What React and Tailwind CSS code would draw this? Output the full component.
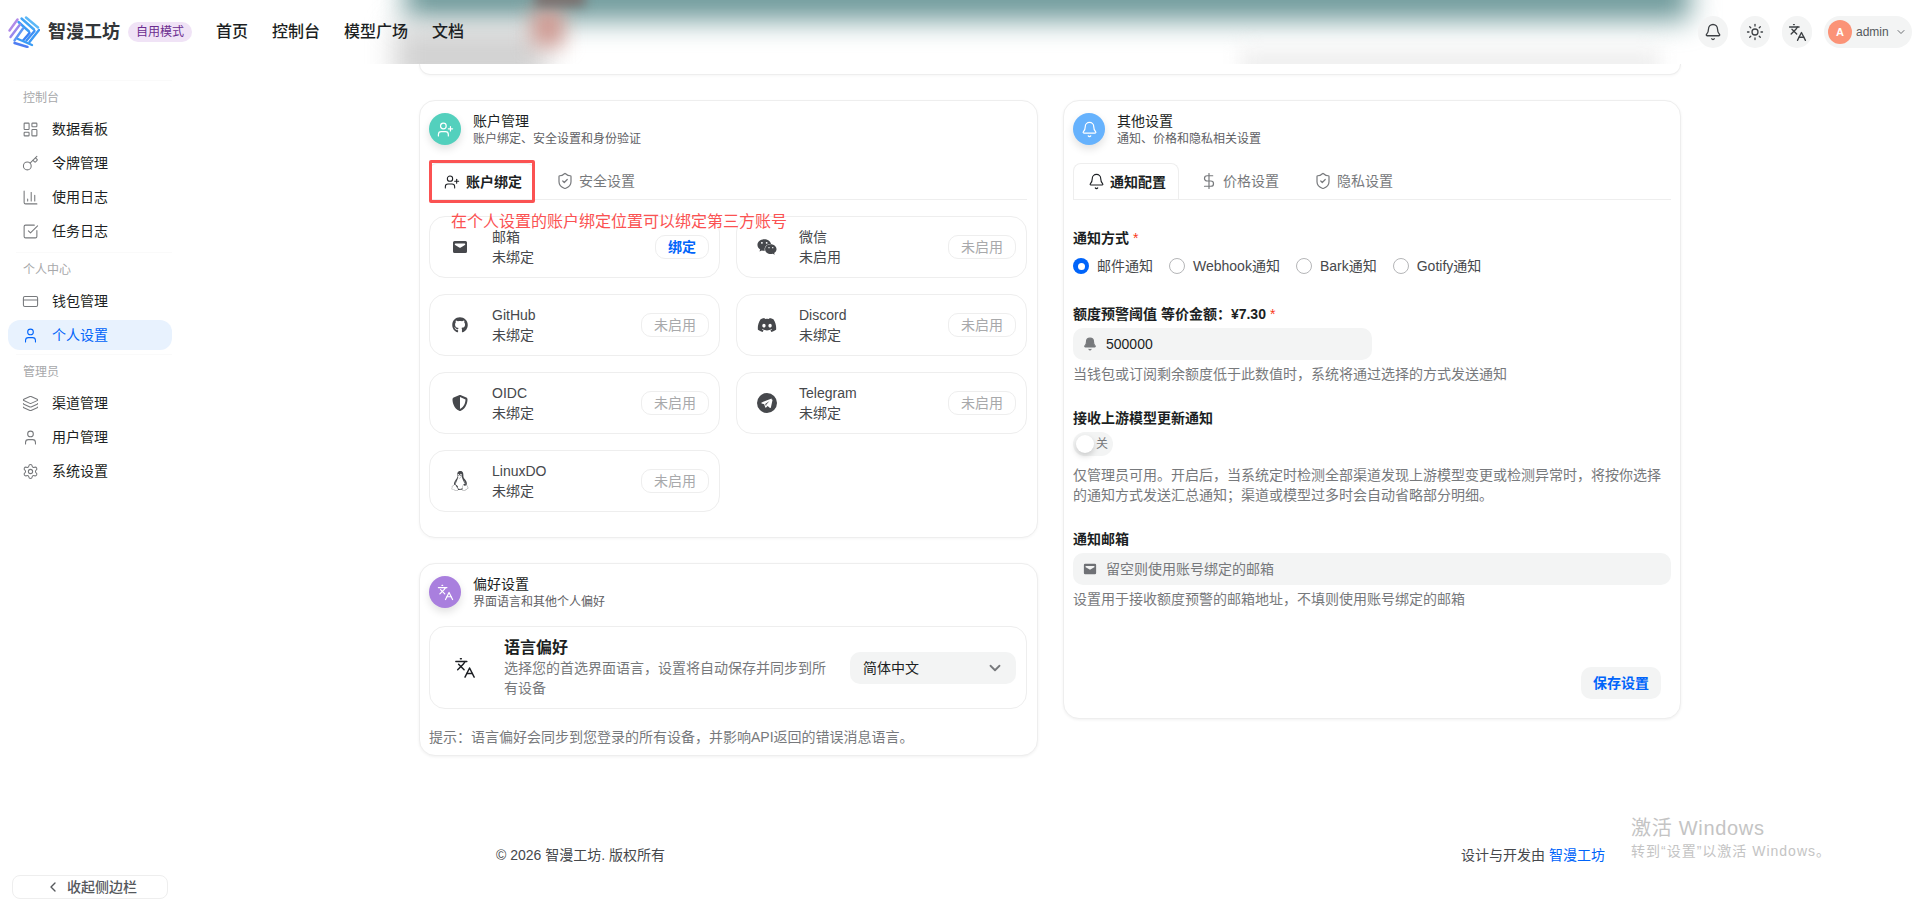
import React from 'react';
import {
  Bell, ChartColumn, ChevronDown, ChevronLeft, CreditCard, DollarSign, Key, Languages,
  LayoutDashboard, Layers, Settings, ShieldCheck, SquareCheckBig, Sun, User, UserPlus,
} from 'lucide-react';
import { FaDiscord, FaGithub, FaLinux, FaWeixin } from 'react-icons/fa';
import { FaShieldHalved } from 'react-icons/fa6';

const sections = [
  {
    title: '控制台',
    pad: 'pb-1.5',
    items: [
      { label: '数据看板', icon: LayoutDashboard },
      { label: '令牌管理', icon: Key },
      { label: '使用日志', icon: ChartColumn },
      { label: '任务日志', icon: SquareCheckBig },
    ],
  },
  {
    title: '个人中心',
    pad: 'pb-1',
    items: [
      { label: '钱包管理', icon: CreditCard },
      { label: '个人设置', icon: User, active: true },
    ],
  },
  {
    title: '管理员',
    pad: 'pb-1',
    items: [
      { label: '渠道管理', icon: Layers },
      { label: '用户管理', icon: User },
      { label: '系统设置', icon: Settings },
    ],
  },
];

const bindings = [
  { name: '邮箱', status: '未绑定', icon: MailIcon, size: 'h-4 w-4', action: '绑定' },
  { name: '微信', status: '未启用', icon: FaWeixin, size: 'h-5 w-5' },
  { name: 'GitHub', status: '未绑定', icon: FaGithub, size: 'h-4 w-4' },
  { name: 'Discord', status: '未绑定', icon: FaDiscord, size: 'h-5 w-5' },
  { name: 'OIDC', status: '未绑定', icon: FaShieldHalved, size: 'h-4 w-4' },
  { name: 'Telegram', status: '未绑定', icon: TelegramIcon, size: 'h-5 w-5' },
  { name: 'LinuxDO', status: '未绑定', icon: FaLinux, size: 'h-5 w-5' },
];

function MailIcon({ className }) {
  return (
    <svg viewBox="0 0 16 16" className={className} fill="currentColor">
      <path d="M2.5 2h11A1.5 1.5 0 0 1 15 3.500v9a1.500 1.500 0 0 1-1.500 1.500h-11A1.500 1.500 0 0 1 1 12.500v-9A1.500 1.500 0 0 1 2.500 2Zm1 2.600a.7.7 0 0 0-.4 1.300l4.500 2.800a.8.8 0 0 0 .8 0l4.500-2.800a.7.7 0 0 0-.4-1.300h-9Z" fillRule="evenodd" />
    </svg>
  );
}

function TelegramIcon({ className }) {
  return (
    <svg viewBox="0 0 20 20" className={className} fill="currentColor">
      <path fillRule="evenodd" d="M10 0a10 10 0 1 1 0 20 10 10 0 0 1 0-20Zm4.600 5.500L4.700 9.400c-.5.200-.5.800 0 1l2.500.9 1 3c.1.400.6.500.9.200l1.500-1.400 2.400 1.800c.3.200.8.100.9-.3l1.600-7.500c.1-.5-.4-.8-.9-.6ZM8.200 11l4.300-2.900-3.100 3.400-.4 1.700L8.200 11Z" />
    </svg>
  );
}

function Logo() {
  return (
    <svg viewBox="0 0 32 32" className="h-8 w-8" fill="none" strokeWidth="2.400" strokeLinecap="round">
      <path d="M18 1.500 L30 11.500" stroke="#5cb8f7" />
      <path d="M13.500 2.500 L26 13.500" stroke="#42a5f6" />
      <path d="M10.500 6 L21 15.500" stroke="#3b9bf5" />
      <path d="M9.500 3.500 L1.500 14.500" stroke="#b18ae8" />
      <path d="M12 8.500 L2.500 21" stroke="#9a88ec" />
      <path d="M15 12.500 L6.500 24.500" stroke="#5f97f4" />
      <path d="M31 14 L21.500 26" stroke="#3c9af5" />
      <path d="M26.500 15 L18.500 24.500" stroke="#3d8ff5" />
      <path d="M21.500 17 L15.500 24" stroke="#3b82f6" />
      <path d="M6.500 27 L19.500 31" stroke="#4f7df2" />
      <path d="M10 23 L24 29" stroke="#3a9cf5" />
    </svg>
  );
}

function TopBlur() {
  return (
    <div className="pointer-events-none absolute inset-0 overflow-hidden">
      <div className="absolute left-[405px] top-[-26px] h-[46px] w-[1285px] bg-[#6c9899] blur-[14px]" />
      <div className="absolute left-[395px] top-[26px] h-[60px] w-[150px] bg-[#d2d2d2] blur-[14px]" />
      <div className="absolute left-[532px] top-[8px] h-[38px] w-[32px] bg-[#d09a92] blur-[10px]" />
      <div className="absolute left-[535px] top-[-8px] h-[14px] w-[50px] bg-[#7a6a68] blur-[6px]" />
      <div className="absolute left-[1240px] top-[48px] h-[40px] w-[420px] bg-[#f0f0f0] blur-[10px]" />
    </div>
  );
}

function Header() {
  return (
    <header className="relative flex h-16 shrink-0 items-center bg-white">
      <TopBlur />
      <div className="relative flex items-center pl-2">
        <Logo />
        <span className="ml-2 text-[18px] font-bold text-[#333639]">智漫工坊</span>
        <span className="ml-2 flex h-5 w-16 items-center justify-center rounded-full bg-[#f0e3f6] text-xs text-[#6b2c8f]">自用模式</span>
        <nav className="ml-6 flex gap-6 text-base font-medium text-[#1c1f23]">
          <span>首页</span>
          <span>控制台</span>
          <span>模型广场</span>
          <span>文档</span>
        </nav>
      </div>
      <div className="relative ml-auto flex items-center gap-3 pr-2">
        <span className="flex h-8 w-[30px] items-center justify-center rounded-full bg-[#f3f4f4] text-[#3d4044]"><Bell size={18} strokeWidth={1.7} /></span>
        <span className="flex h-8 w-[30px] items-center justify-center rounded-full bg-[#f3f4f4] text-[#3d4044]"><Sun size={18} strokeWidth={1.7} /></span>
        <span className="flex h-8 w-[30px] items-center justify-center rounded-full bg-[#f3f4f4] text-[#3d4044]"><Languages size={19} strokeWidth={1.7} /></span>
        <span className="flex h-8 w-[88px] items-center rounded-full bg-[#f3f4f4] pl-1">
          <span className="flex h-6 w-6 items-center justify-center rounded-full bg-[#fb9377] text-[11px] font-semibold text-white">A</span>
          <span className="ml-1 text-xs font-medium text-[#55585c]">admin</span>
          <ChevronDown size={12} className="ml-1.5 text-[#6b6e72]" />
        </span>
      </div>
    </header>
  );
}

function Sidebar() {
  return (
    <aside className="flex w-[180px] shrink-0 flex-col bg-white pt-4">
      {sections.map((section) => (
        <div key={section.title} className={`ml-2 w-[164px] ${section.pad}`}>
          <div className="ml-2 border-t border-[#fafafa] pt-[7px]">
            <div className="ml-[7px] flex h-5 items-center text-xs text-[#a7a8aa]">{section.title}</div>
          </div>
          <div className="mt-1.5 flex flex-col gap-1">
            {section.items.map(({ label, icon: Icon, active }) => (
              <div
                key={label}
                className={active
                  ? 'flex h-[30px] items-center gap-[13px] rounded-xl bg-[#e8f2fe] pl-[14px] text-sm text-[#0064fa]'
                  : 'flex h-[30px] items-center gap-[13px] rounded-xl pl-[14px] text-sm text-[#1c1f23]'}
              >
                <Icon size={17} strokeWidth={1.5} className={active ? 'text-[#0064fa]' : 'text-[#77797c]'} />
                <span>{label}</span>
              </div>
            ))}
          </div>
        </div>
      ))}
      <div className="mt-auto mb-3 ml-3 flex h-6 w-[156px] items-center rounded-lg border border-[#eeeeee] pl-[32px] text-sm font-medium text-[#55585c]">
        <ChevronLeft size={16} />
        <span className="ml-[6px]">收起侧边栏</span>
      </div>
    </aside>
  );
}

function CardHead({ color, icon: Icon, title, desc }) {
  return (
    <div className="flex items-center gap-3">
      <span className={`flex h-8 w-8 items-center justify-center rounded-full text-white shadow-[0_4px_8px_rgba(0,0,0,0.12)] ${color}`}>
        <Icon size={17} strokeWidth={1.7} />
      </span>
      <div>
        <div className="text-sm leading-[20px] text-[#1c1f23]">{title}</div>
        <div className="text-xs leading-[16px] text-[#5e6064]">{desc}</div>
      </div>
    </div>
  );
}

function Tab({ icon: Icon, iconSize, label, active }) {
  return (
    <div
      className={active
        ? 'flex h-9 w-[106px] items-center gap-1.5 rounded-t-lg border border-b-0 border-[#eeeeee] bg-white pl-[14px] text-sm font-semibold text-[#1c1f23]'
        : 'flex h-9 w-[106px] items-center gap-1.5 pl-[14px] text-sm text-[#77797c]'}
    >
      <span className="flex w-4 shrink-0 justify-center">
        <Icon size={iconSize} strokeWidth={1.6} className="shrink-0" />
      </span>
      <span>{label}</span>
    </div>
  );
}

function BindCard({ item }) {
  const Icon = item.icon;
  return (
    <div className="flex h-[62px] items-center rounded-2xl border border-[#eeeeee] px-[10px]">
      <span className="flex w-10 justify-center text-[#46484c]">
        <Icon className={item.size} />
      </span>
      <div className="ml-3 flex-1 text-sm leading-5 text-[#46484c]">
        <div>{item.name}</div>
        <div>{item.status}</div>
      </div>
      {item.action ? (
        <span className="flex h-6 items-center rounded-[10px] border border-[#eeeeee] px-3 text-sm font-semibold text-[#0064fa]">{item.action}</span>
      ) : (
        <span className="flex h-6 items-center rounded-[10px] border border-[#eeeeee] px-3 text-sm text-[#a8a9ab]">未启用</span>
      )}
    </div>
  );
}

function AccountCard() {
  return (
    <section className="relative h-[438px] rounded-2xl border border-[#eeeeee] bg-white pt-[10px] pr-[10px] pl-[9px] shadow-[0_1px_3px_rgba(0,0,0,0.04)]">
      <CardHead color="bg-[#53d0bd]" icon={UserPlus} title="账户管理" desc="账户绑定、安全设置和身份验证" />
      <div className="mt-4 flex gap-2 border-b border-[#eeeeee]">
        <Tab icon={UserPlus} iconSize={16} label="账户绑定" active />
        <Tab icon={ShieldCheck} iconSize={18} label="安全设置" />
      </div>
      <div className="mt-4 grid grid-cols-2 gap-4">
        {bindings.map((item) => <BindCard key={item.name} item={item} />)}
      </div>
      <div className="absolute left-[9px] top-[59px] h-[43px] w-[106px] rounded-[2px] border-[3px] border-[#fb5252]" />
      <div className="absolute left-[31px] top-[111px] text-base leading-[20px] text-[#fb5252]">在个人设置的账户绑定位置可以绑定第三方账号</div>
    </section>
  );
}

function PreferenceCard() {
  return (
    <section className="h-[193px] rounded-2xl border border-[#eeeeee] bg-white pt-[10px] pr-[10px] pl-[9px] shadow-[0_1px_3px_rgba(0,0,0,0.06)]">
      <CardHead color="bg-[#a97fde]" icon={Languages} title="偏好设置" desc="界面语言和其他个人偏好" />
      <div className="mt-4 flex h-[83px] items-center rounded-2xl border border-[#eeeeee] pr-[10px]">
        <span className="ml-[24px] text-[#1c1f23]"><Languages size={22} strokeWidth={1.6} /></span>
        <div className="ml-[28px] w-[330px]">
          <div className="text-base leading-[20px] font-semibold text-[#1c1f23]">语言偏好</div>
          <div className="text-sm leading-5 text-[#77797c]">选择您的首选界面语言，设置将自动保存并同步到所有设备</div>
        </div>
        <div className="ml-auto flex h-8 w-[166px] items-center justify-between rounded-[10px] bg-[#f3f4f4] pr-3 pl-[13px] text-sm text-[#1c1f23]">
          <span>简体中文</span>
          <ChevronDown size={18} strokeWidth={2.4} className="text-[#77797c]" />
        </div>
      </div>
      <p className="mt-[18px] text-sm leading-5 text-[#77797c]">提示：语言偏好会同步到您登录的所有设备，并影响API返回的错误消息语言。</p>
    </section>
  );
}

function Radio({ label, checked }) {
  return (
    <span className="flex items-center gap-2 text-sm text-[#46484c]">
      {checked ? (
        <span className="flex h-4 w-4 items-center justify-center rounded-full bg-[#0064fa]">
          <span className="h-[7px] w-[7px] rounded-full bg-white" />
        </span>
      ) : (
        <span className="h-4 w-4 rounded-full border border-[#b5b6b8]" />
      )}
      {label}
    </span>
  );
}

function Label({ children, required }) {
  return (
    <div className="h-5 text-sm leading-5 font-semibold text-[#1c1f23]">
      {children}
      {required && <span className="ml-1 font-normal text-[#f93920]">*</span>}
    </div>
  );
}

function OtherCard() {
  return (
    <section className="h-[619px] rounded-2xl border border-[#eeeeee] bg-white px-[9px] pt-[10px] shadow-[0_1px_3px_rgba(0,0,0,0.06)]">
      <CardHead color="bg-[#66b2fd]" icon={Bell} title="其他设置" desc="通知、价格和隐私相关设置" />
      <div className="mt-4 flex gap-2 border-b border-[#eeeeee]">
        <Tab icon={Bell} iconSize={17} label="通知配置" active />
        <Tab icon={DollarSign} iconSize={18} label="价格设置" />
        <Tab icon={ShieldCheck} iconSize={18} label="隐私设置" />
      </div>

      <div className="mt-7">
        <Label required>通知方式</Label>
        <div className="mt-1.5 flex h-6 items-center gap-4">
          <Radio label="邮件通知" checked />
          <Radio label="Webhook通知" />
          <Radio label="Bark通知" />
          <Radio label="Gotify通知" />
        </div>
      </div>

      <div className="mt-[26px]">
        <Label required>额度预警阈值 等价金额：¥7.30</Label>
        <div className="mt-1 flex h-8 w-[299px] items-center gap-[9px] rounded-[10px] bg-[#f3f4f4] pl-[10px] text-sm text-[#1c1f23]">
          <Bell size={14} fill="currentColor" className="text-[#77797c]" />
          <span>500000</span>
        </div>
        <p className="mt-1 text-sm leading-5 text-[#77797c]">当钱包或订阅剩余额度低于此数值时，系统将通过选择的方式发送通知</p>
      </div>

      <div className="mt-6">
        <Label>接收上游模型更新通知</Label>
        <div className="relative mt-1 flex h-6 w-10 items-center justify-end rounded-full bg-[#f3f4f4] pr-[5px] text-xs text-[#77797c]">
          <span className="absolute left-[3px] top-[3px] h-[18px] w-[18px] rounded-full bg-white shadow-[0_3px_6px_rgba(0,0,0,0.18)]" />
          关
        </div>
        <p className="mt-[9px] text-sm leading-5 text-[#77797c]">仅管理员可用。开启后，当系统定时检测全部渠道发现上游模型变更或检测异常时，将按你选择的通知方式发送汇总通知；渠道或模型过多时会自动省略部分明细。</p>
      </div>

      <div className="mt-6">
        <Label>通知邮箱</Label>
        <div className="mt-1 flex h-8 items-center gap-[9px] rounded-[10px] bg-[#f3f4f4] pl-[10px] text-sm text-[#77797c]">
          <MailIcon className="h-[14px] w-[14px] text-[#6f7175]" />
          <span>留空则使用账号绑定的邮箱</span>
        </div>
        <p className="mt-1 text-sm leading-5 text-[#77797c]">设置用于接收额度预警的邮箱地址，不填则使用账号绑定的邮箱</p>
      </div>

      <div className="mt-[58px] flex justify-end pr-[10px]">
        <span className="flex h-8 w-20 items-center justify-center rounded-[10px] bg-[#f3f4f4] text-sm font-semibold text-[#0064fa]">保存设置</span>
      </div>
    </section>
  );
}

export default function App() {
  return (
    <div className="relative flex h-[911px] flex-col overflow-hidden bg-white font-['Liberation_Sans','Noto_Sans_CJK_SC',sans-serif]">
      <Header />
      <div className="flex min-h-0 flex-1">
        <Sidebar />
        <main className="flex-1">
          <div className="mx-auto w-[1262px]">
            <div className="h-[11px] rounded-b-2xl border border-t-0 border-[#eeeeee] shadow-[0_1px_3px_rgba(0,0,0,0.04)]" />
            <div className="mt-[25px] grid grid-cols-[619px_618px] items-start gap-[25px]">
              <div className="flex flex-col gap-[25px]">
                <AccountCard />
                <PreferenceCard />
              </div>
              <OtherCard />
            </div>
          </div>
          <footer className="mx-auto mt-[89px] flex w-[1110px] justify-between pl-px text-sm leading-5 text-[#46484c]">
            <span>© 2026 智漫工坊. 版权所有</span>
            <span>设计与开发由 <span className="text-[#0064fa]">智漫工坊</span></span>
          </footer>
        </main>
      </div>
      <div className="pointer-events-none absolute left-[1631px] top-[814px] text-[#c4c4c4]">
        <div className="text-[20px] leading-[28px] tracking-[0.7px]">激活 Windows</div>
        <div className="text-sm leading-[19px] tracking-[1px]">转到“设置”以激活 Windows。</div>
      </div>
    </div>
  );
}
